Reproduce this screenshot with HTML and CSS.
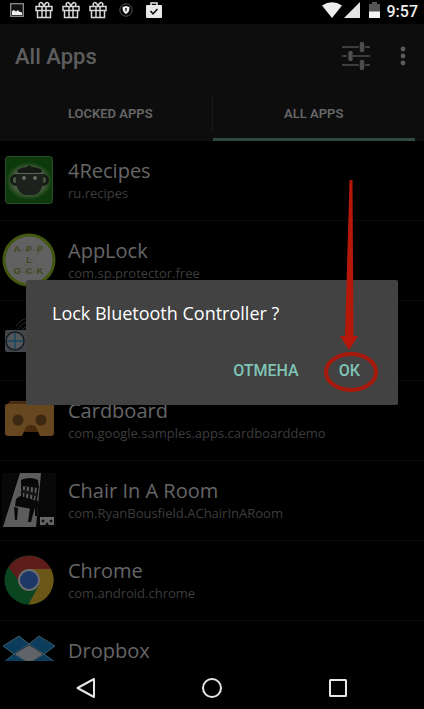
FILE: index.html
```
<!DOCTYPE html>
<html lang="en">

<head>
    <meta charset="UTF-8">
    <meta name="viewport" content="width=device-width, initial-scale=1.0">
    <title>All Apps</title>
    <link rel="stylesheet" href="styles.css">
</head>

<body>
    <div class="screen">
        <!-- status bar -->
        <div class="status">
            <div class="notices">
                <svg width="14" height="14" viewBox="0 0 14 14">
                    <rect x="0.7" y="0.7" width="12.6" height="12.6" fill="#111" stroke="#999" stroke-width="1.2" />
                    <path d="M2 12V8l2-1 2 1.500 2-1.500 1 1.500 3 1v2.500z" fill="#eee" />
                </svg>
                <svg class="gift" width="18" height="18" viewBox="0 0 18 18">
                    <path d="M1 5.500h16v4H1zM2.500 9.500v7h13v-7M7 5.500v11M11 5.500v11M9 5C7 0 3 1 4.500 5M9 5c2-5 6-4 4.500 0" />
                </svg>
                <svg class="gift" width="18" height="18" viewBox="0 0 18 18">
                    <path d="M1 5.500h16v4H1zM2.500 9.500v7h13v-7M7 5.500v11M11 5.500v11M9 5C7 0 3 1 4.500 5M9 5c2-5 6-4 4.500 0" />
                </svg>
                <svg class="gift" width="18" height="18" viewBox="0 0 18 18">
                    <path d="M1 5.500h16v4H1zM2.500 9.500v7h13v-7M7 5.500v11M11 5.500v11M9 5C7 0 3 1 4.500 5M9 5c2-5 6-4 4.500 0" />
                </svg>
                <svg class="shield" width="14" height="14" viewBox="0 0 14 14">
                    <circle cx="7" cy="7" r="6.200" fill="none" stroke="#555" />
                    <path d="M3.500 4L7 3l3.500 1c0 4-1 5.500-3.500 7C4.500 9.500 3.500 8 3.500 4z" fill="#eee" />
                    <path d="M6 5h2v2L7 9 6 7z" fill="#555" />
                </svg>
                <svg width="16" height="16" viewBox="0 0 16 16">
                    <path d="M5 3V1h6v2" fill="none" stroke="#e8e8e8" stroke-width="1.500" />
                    <rect y="3" width="16" height="13" rx="1" fill="#e8e8e8" />
                    <path d="M4.500 9l2.500 2.800L11.500 7" fill="none" stroke="#111" stroke-width="1.600" />
                </svg>
            </div>
            <div class="signals">
                <svg width="20" height="16" viewBox="0 0 20 16">
                    <path d="M0 3.500Q10-3 20 3.500L10 16z" fill="#eee" />
                </svg>
                <svg width="16" height="16" viewBox="0 0 16 16">
                    <path d="M16 0v16H0z" fill="#e4e4e4" />
                </svg>
                <svg class="battery" width="11" height="16" viewBox="0 0 11 16">
                    <path d="M0 2h3V0h5v2h3v14H0z" fill="#555" />
                    <path d="M0 9.500h11V16H0z" fill="#f4f4f4" />
                </svg>
                <span class="clock">9:57</span>
            </div>
        </div>

        <!-- title and tabs -->
        <header class="header">
            <h1>All Apps</h1>
            <button class="tool" aria-label="Settings">
                <svg width="28" height="28" viewBox="0 0 28 28" fill="none" stroke="#4d4d4d">
                    <path d="M0 5h17M23 5h5M0 14h5M11 14h17M0 23h17M23 23h5" stroke-width="1.500" />
                    <path d="M20 2v6M8.500 11v6M20 20v6" stroke-width="4.500" stroke-linecap="round" />
                </svg>
            </button>
            <button class="tool more" aria-label="More">
                <svg width="6" height="20" viewBox="0 0 6 20" fill="#5a5a5a">
                    <circle cx="3" cy="3" r="2.400" />
                    <circle cx="3" cy="10" r="2.400" />
                    <circle cx="3" cy="17" r="2.400" />
                </svg>
            </button>
        </header>
        <nav class="tabs">
            <button class="tab">LOCKED APPS</button>
            <span class="divider"></span>
            <button class="tab active">ALL APPS</button>
        </nav>

        <!-- app list -->
        <ul class="list">
            <li class="row">
                <svg class="icon" viewBox="0 0 54 54">
                    <defs>
                        <radialGradient id="glow">
                            <stop offset="0.600" stop-color="#59684f" />
                            <stop offset="1" stop-color="#0c3a0a" />
                        </radialGradient>
                    </defs>
                    <rect x="3.500" y="3.500" width="47" height="47" rx="3" fill="#0c3a0a" stroke="#2f4f2d" />
                    <ellipse cx="27" cy="28" rx="23" ry="19" fill="url(#glow)" />
                    <circle cx="14" cy="27" r="4.500" fill="none" stroke="#171b17" stroke-width="3" />
                    <circle cx="41" cy="27" r="4.500" fill="none" stroke="#171b17" stroke-width="3" />
                    <path d="M15 17q6-3 10-3l2-2 3 2q5 0 10 3l-1 3H16z" fill="#161916" />
                    <path d="M14 21h27c2 11-3 21-10 21h-7C17 42 12 32 14 21z" fill="#1d211d" />
                    <circle cx="22" cy="25" r="2" fill="#64705c" />
                    <circle cx="33" cy="25" r="2" fill="#64705c" />
                </svg>
                <div class="text">
                    <h2>4Recipes</h2>
                    <p>ru.recipes</p>
                </div>
            </li>
            <li class="row">
                <svg class="icon" viewBox="0 0 54 54">
                    <circle cx="27" cy="27" r="25" fill="#616161" stroke="#42570f" stroke-width="3" />
                    <path d="M16 17h24L16 39h24" fill="none" stroke="#555b49" stroke-width="1" />
                    <g class="badge">
                        <text x="15" y="19">A</text>
                        <text x="27" y="19">P</text>
                        <text x="38" y="19">P</text>
                        <text x="27" y="30">L</text>
                        <text x="15" y="41">O</text>
                        <text x="27" y="41">C</text>
                        <text x="38" y="41">K</text>
                    </g>
                </svg>
                <div class="text">
                    <h2>AppLock</h2>
                    <p>com.sp.protector.free</p>
                </div>
            </li>
            <li class="row">
                <svg class="icon" viewBox="0 0 54 54">
                    <path d="M14 13q6-8 13-8M16 16q5-7 11-7M19 18q4-5 8-5" fill="none" stroke="#292929" />
                    <rect x="3" y="17" width="47" height="22" rx="2" fill="#42464b" />
                    <circle cx="13" cy="28" r="9" fill="#53575b" stroke="#171c20" stroke-width="1.500" />
                    <path d="M13 20v16M5 28h16" stroke="#16485d" stroke-width="1.500" />
                </svg>
            </li>
            <li class="row">
                <svg class="icon" viewBox="0 0 54 54">
                    <path d="M8 8h36l3 4H5z" fill="#4a2c0e" />
                    <path d="M20 30h18v9H20z" fill="#492a0d" />
                    <path d="M5 11h45q2 0 2 2v27q0 3-3 3H38l-4-9q-5-4-10 0l-4 9H6q-3 0-3-3V13q0-2 2-2z" fill="#664720" />
                    <circle cx="16" cy="27" r="5.500" fill="#3d2812" />
                    <circle cx="39" cy="27" r="5.500" fill="#3d2812" />
                </svg>
                <div class="text">
                    <h2>Cardboard</h2>
                    <p>com.google.samples.apps.cardboarddemo</p>
                </div>
            </li>
            <li class="row">
                <svg class="icon" viewBox="0 0 54 54">
                    <path d="M0 0h54v54H0z" fill="#080808" />
                    <path d="M18 0h21l-5 54H1z" fill="#5c5c5c" />
                    <path d="M19 7q9-4 17 0l1 8-18-2z" fill="#070707" />
                    <path d="M20 13v12M36 13l-2 15M24 14l-1 11M28 14l-1 12M32 14l-1 12" stroke="#0a0909" stroke-width="1.800" />
                    <path d="M19 18l17 4" stroke="#161616" stroke-width="3" />
                    <path d="M14 26l4-3 18 5v6l-6 2-17-3z" fill="#080808" />
                    <path d="M12 34l4 1-1 12h-2zM28 35l5-1-4 15h-3zM33 33l3 0-1 10h-2z" fill="#080808" />
                    <path d="M38 44h14v8h-5l-2-3-2 3h-5z" fill="#666" />
                    <circle cx="41" cy="48" r="1.500" fill="#111" />
                    <circle cx="49" cy="48" r="1.500" fill="#111" />
                </svg>
                <div class="text">
                    <h2>Chair In A Room</h2>
                    <p>com.RyanBousfield.AChairInARoom</p>
                </div>
            </li>
            <li class="row">
                <svg class="icon" viewBox="0 0 54 54">
                    <circle cx="27" cy="27" r="24.500" fill="#0a4520" />
                    <path d="M27 16H49A24.500 24.500 0 0 1 26.500 51.500L37 32z" fill="#6b5617" />
                    <path d="M6.500 14A24.500 24.500 0 0 1 49 16H27Q18 17 16 27z" fill="#5e1c1a" />
                    <circle cx="27" cy="27" r="10" fill="#1d3766" stroke="#6c6c6c" stroke-width="2" />
                </svg>
                <div class="text">
                    <h2>Chrome</h2>
                    <p>com.android.chrome</p>
                </div>
            </li>
            <li class="row">
                <svg class="icon" viewBox="0 0 54 54">
                    <path d="M17 3l10 8-15 10L1 13zM37 3l16 10-11 8-15-10zM12 21l15 9v20L2 29zM42 21l11 8-26 21V30z" fill="#0c3c5b" stroke="#3d5a6b" stroke-width="1" />
                    <path d="M27 12l14 9-14 9-14-9z" fill="#606468" />
                </svg>
                <div class="text">
                    <h2>Dropbox</h2>
                </div>
            </li>
        </ul>

        <!-- system navigation -->
        <footer class="navbar">
            <button aria-label="Back">
                <svg width="22" height="22" viewBox="0 0 22 22"><path d="M19 2v18L2.500 11z" /></svg>
            </button>
            <button aria-label="Home">
                <svg width="22" height="22" viewBox="0 0 22 22"><circle cx="11" cy="11" r="9" /></svg>
            </button>
            <button aria-label="Recent">
                <svg width="22" height="22" viewBox="0 0 22 22"><rect x="3" y="3" width="16" height="16" rx="0.500" /></svg>
            </button>
        </footer>

        <!-- dialog over the list -->
        <div class="overlay">
            <div class="dialog" role="dialog" aria-labelledby="question">
                <p id="question">Lock Bluetooth Controller ?</p>
                <div class="actions">
                    <button>ОТМЕНА</button>
                    <button>ОК</button>
                </div>
                <svg class="pointer" width="60" height="220" viewBox="0 0 60 220">
                    <path d="M29.500 4h3l1 156h4.500l-9 14-9-14h5z" fill="#b51808" />
                    <ellipse cx="31" cy="196" rx="25" ry="18" fill="none" stroke="#a81a0c" stroke-width="4" />
                </svg>
            </div>
        </div>
    </div>
</body>

</html>
```
FILE: styles.css
```
* {
    box-sizing: border-box;
    margin: 0;
    padding: 0;
}

body {
    background-color: #000;
    font-family: Roboto, "Liberation Sans", sans-serif;
}

button {
    border: none;
    background: none;
    font-family: inherit;
}

svg {
    display: block;
    flex: none;
}

.screen {
    position: relative;
    display: flex;
    flex-direction: column;
    height: 100vh;
    overflow: hidden;
}

/* status bar */
.status {
    display: flex;
    justify-content: space-between;
    align-items: center;
    height: 24px;
    flex: none;
    padding: 0 6px 4px 10px;
}

.notices {
    display: flex;
    align-items: center;
    gap: 9px;
}

.notices .shield {
    margin: 0 4px 0 3px;
}

.notices svg:first-child {
    margin-right: 2px;
}

.gift {
    fill: none;
    stroke: #d8d8d8;
    stroke-width: 1.5;
}

.signals {
    display: flex;
    align-items: center;
    gap: 2px;
}

.battery {
    margin: 0 5px 0 7px;
}

.clock {
    padding-top: 3px;
    color: #eee;
    font-size: 16px;
    line-height: 20px;
    font-weight: 500;
}

/* title and tabs */
.header {
    display: flex;
    align-items: center;
    height: 64px;
    flex: none;
    padding: 0 18px 0 15px;
    background-color: #0d0d0d;
}

.header h1 {
    flex: 1;
    color: #5e5e5e;
    font-size: 22px;
    font-weight: 500;
}

.more {
    margin-left: 30px;
}

.tabs {
    display: flex;
    height: 53px;
    flex: none;
    padding: 0 9px;
    background-color: #0d0d0d;
}

.tab {
    flex: 1;
    border-bottom: 3px solid transparent;
    color: #666;
    font-size: 13px;
    font-weight: 600;
}

.active {
    border-bottom-color: #2f4a43;
}

.divider {
    width: 1px;
    margin: 8px 0;
    background-color: #191919;
}

/* app list */
.list {
    flex: 1;
    min-height: 0;
    overflow: hidden;
    list-style: none;
}

.row {
    display: flex;
    align-items: center;
    gap: 12px;
    height: 80px;
    padding: 0 2px 2px;
    border-bottom: 1px solid #090909;
}

.icon {
    width: 54px;
    height: 54px;
}

.badge {
    fill: #3b4a1c;
    font: bold 9px "Liberation Sans", sans-serif;
    text-anchor: middle;
}

.text {
    height: 44px;
    font-family: "Open Sans", "Noto Sans", sans-serif;
}

.text h2 {
    color: #666;
    font-size: 20px;
    line-height: 26px;
    font-weight: 400;
}

.text p {
    color: #3d3d3d;
    font-size: 13px;
    line-height: 18px;
}

/* system navigation */
.navbar {
    display: flex;
    justify-content: center;
    align-items: center;
    gap: 104px;
    height: 48px;
    flex: none;
    padding-top: 5px;
}

.navbar svg {
    fill: none;
    stroke: #e6e6e6;
    stroke-width: 2;
    stroke-linejoin: round;
}

/* dialog */
.overlay {
    position: absolute;
    top: 24px;
    right: 0;
    bottom: 48px;
    left: 0;
    display: flex;
    align-items: center;
    padding: 0 26px;
}

.dialog {
    position: relative;
    flex: 1;
    padding: 20px 26px 22px;
    border-radius: 2px;
    background-color: #424242;
}

.dialog p {
    color: #fff;
    font-family: "Open Sans", "Noto Sans", sans-serif;
    font-size: 18px;
    line-height: 26px;
}

.actions {
    display: flex;
    justify-content: flex-end;
    gap: 40px;
    margin-top: 33px;
    padding: 0 12px 0 0;
}

.actions button {
    color: #7fc4b6;
    font-size: 16px;
    line-height: 24px;
    font-weight: 500;
}

/* red arrow pointing at the confirm button */
.pointer {
    position: absolute;
    right: 18px;
    bottom: 9px;
    pointer-events: none;
}
```
